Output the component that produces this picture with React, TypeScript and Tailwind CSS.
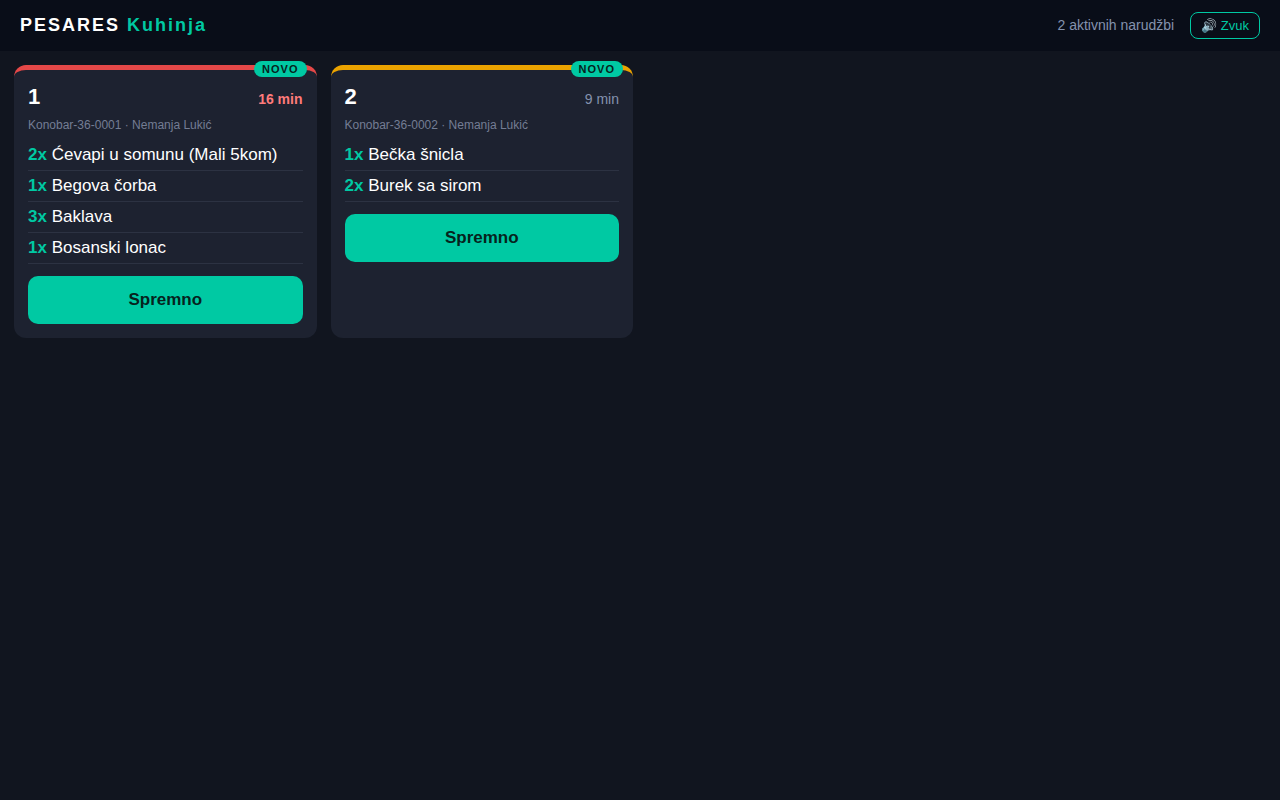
import clsx from 'clsx';

type OrderItem = { qty: number; name: string };

type Order = {
  table: string;
  number: string;
  waiter: string;
  minutes: number;
  isNew: boolean;
  items: OrderItem[];
};

const ORDERS: Order[] = [
  {
    table: '1',
    number: 'Konobar-36-0001',
    waiter: 'Nemanja Lukić',
    minutes: 16,
    isNew: true,
    items: [
      { qty: 2, name: 'Ćevapi u somunu (Mali 5kom)' },
      { qty: 1, name: 'Begova čorba' },
      { qty: 3, name: 'Baklava' },
      { qty: 1, name: 'Bosanski lonac' },
    ],
  },
  {
    table: '2',
    number: 'Konobar-36-0002',
    waiter: 'Nemanja Lukić',
    minutes: 9,
    isNew: true,
    items: [
      { qty: 1, name: 'Bečka šnicla' },
      { qty: 2, name: 'Burek sa sirom' },
    ],
  },
];

// Minutes after which an order counts as late.
const LATE_AFTER = 15;

function OrderCard({ order }: { order: Order }) {
  const late = order.minutes >= LATE_AFTER;

  return (
    <article
      className={clsx(
        'relative rounded-xl border-t-5 bg-[#1d2230] p-3.5',
        late ? 'border-[#e54848]' : 'border-[#eba300]'
      )}
    >
      {order.isNew && (
        <span className="absolute -top-[9px] right-2.5 rounded-[10px] bg-[#00c9a3] px-2 py-0.5 text-[11px] leading-3 font-bold tracking-[1px] text-[#06231d]">
          NOVO
        </span>
      )}

      <div className="flex items-baseline justify-between">
        <h2 className="text-[22px] leading-[26px] font-bold">{order.table}</h2>
        <span
          className={clsx(
            'text-sm leading-4',
            late ? 'font-bold text-[#ff7b7b]' : 'text-[#8492ae]'
          )}
        >
          {order.minutes} min
        </span>
      </div>

      <p className="my-2 text-xs leading-[14px] text-[#747d94]">
        {`${order.number} · ${order.waiter}`}
      </p>

      <ul>
        {order.items.map((item) => (
          <li
            key={item.name}
            className="border-b border-[#2c3242] py-[5px] text-[17px] leading-5"
          >
            <span className="font-bold text-[#00c9a3]">{item.qty}x</span> {item.name}
          </li>
        ))}
      </ul>

      <button
        type="button"
        className="mt-3 w-full rounded-[10px] bg-[#00c9a3] py-3.5 text-[17px] leading-5 font-bold text-[#06231d]"
      >
        Spremno
      </button>
    </article>
  );
}

export default function App() {
  return (
    <div className="min-h-screen bg-[#11151f] font-['Liberation_Sans',Arial,sans-serif] text-white">
      <header className="flex items-center justify-between bg-[#090d18] px-5 py-3">
        <h1 className="text-lg leading-[21px] font-bold tracking-[2px]">
          PESARES <span className="text-[#00c9a3]">Kuhinja</span>
        </h1>
        <div className="flex items-center gap-4">
          <span className="text-sm leading-[17px] text-[#8492ae]">
            {`${ORDERS.length} aktivnih narudžbi`}
          </span>
          <button
            type="button"
            className="rounded-lg border border-[#00c9a3] px-2.5 py-[5px] text-[13px] leading-[15px] text-[#00c9a3]"
          >
            🔊 Zvuk
          </button>
        </div>
      </header>

      <main className="grid grid-cols-[repeat(auto-fill,minmax(280px,1fr))] gap-3.5 p-3.5">
        {ORDERS.map((order) => (
          <OrderCard key={order.number} order={order} />
        ))}
      </main>
    </div>
  );
}
